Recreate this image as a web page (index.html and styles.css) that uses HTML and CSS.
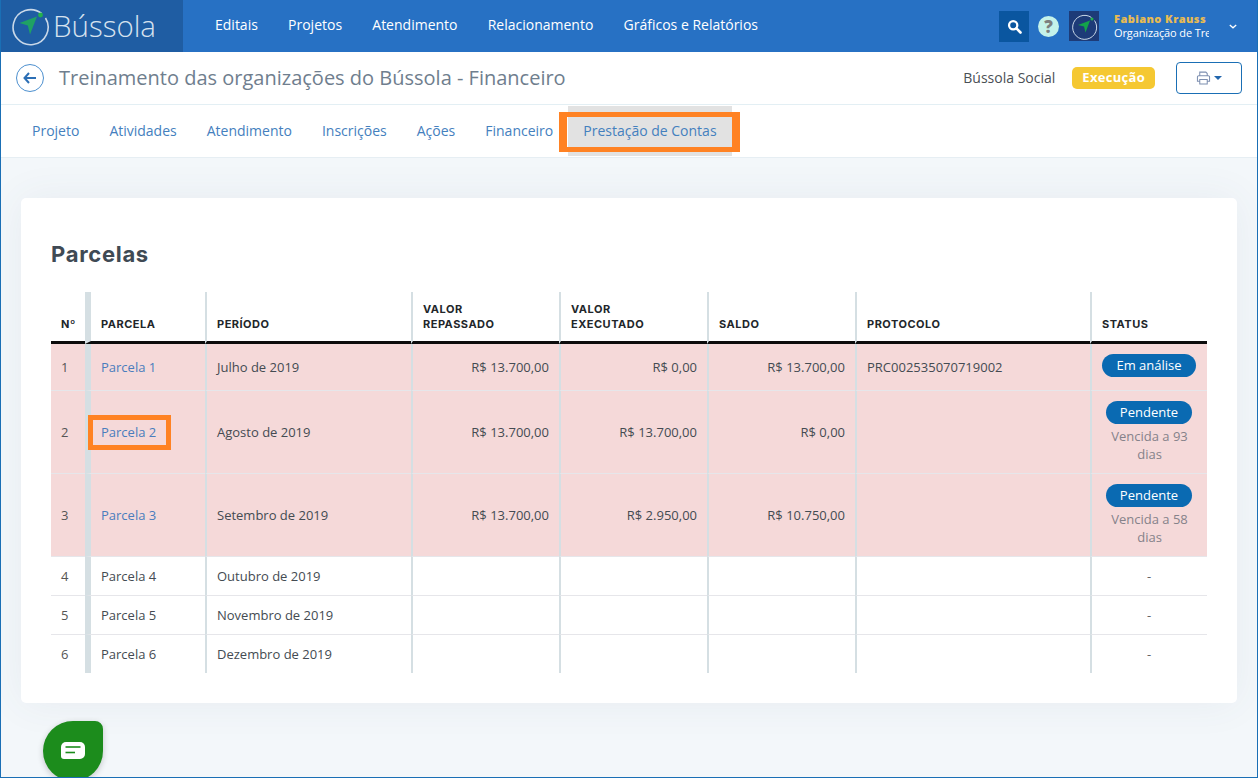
FILE: index.html
```html
<!DOCTYPE html>
<html lang="pt-BR">
<head>
<meta charset="utf-8">
<title>Bússola - Prestação de Contas</title>
<link rel="stylesheet" href="styles.css">
</head>
<body>
<div class="frame">
  <header class="topbar">
    <a class="brand">
      <svg class="brand-mark" viewBox="0 0 40 40" width="40" height="40">
        <path d="M31.5 7.5A17.5 17.5 0 1 0 35.5 12" fill="none" stroke="#c9d8e8" stroke-width="1.6"/>
        <circle cx="30.5" cy="9" r="2.4" fill="#23b14d"/>
        <path d="M9.5 17 L27 10.5 L20 28.5 L17.8 19.6 Z" fill="#1fa164"/>
      </svg>
      <span class="brand-name">Bússola</span>
    </a>
    <nav class="mainnav">
      <a>Editais</a><a>Projetos</a><a>Atendimento</a><a>Relacionamento</a><a>Gráficos e Relatórios</a>
    </nav>
    <div class="userbox">
      <button class="searchbtn" aria-label="Buscar">
        <svg viewBox="0 0 16 16" width="15" height="15"><circle cx="6.6" cy="6.6" r="4.4" fill="none" stroke="#fff" stroke-width="2.4"/><path d="M10 10l4.4 4.4" stroke="#fff" stroke-width="2.8" stroke-linecap="round"/></svg>
      </button>
      <span class="helpicon">?</span>
      <span class="avatar">
        <svg viewBox="0 0 30 30" width="30" height="30">
          <path d="M22.5 6.500A12 12 0 1 0 25.5 9.500" fill="none" stroke="#c9d8e8" stroke-width="1"/>
          <circle cx="23" cy="8" r="1.5" fill="#23b14d"/>
          <path d="M9 14 L21 9.500 L16.500 21.500 L15 15.500 Z" fill="#13a34a"/>
        </svg>
      </span>
      <div class="userinfo">
        <strong class="username">Fabiano Krauss</strong>
        <span class="userorg">Organização de Tre</span>
      </div>
      <svg class="userchev" viewBox="0 0 10 6" width="8" height="5"><path d="M1 1l4 3.600L9 1" fill="none" stroke="#fff" stroke-width="1.600"/></svg>
    </div>
  </header>

  <section class="titlebar">
    <a class="backbtn" aria-label="Voltar">
      <svg viewBox="0 0 14 12" width="14" height="12"><path d="M6 1L1.500 6 6 11M2 6h11" fill="none" stroke="#2c6fb5" stroke-width="2"/></svg>
    </a>
    <h1 class="pagetitle">Treinamento das organizações do Bússola - Financeiro</h1>
    <span class="program">Bússola Social</span>
    <span class="phase">Execução</span>
    <button class="printbtn" aria-label="Imprimir">
      <svg viewBox="0 0 16 15" width="15" height="14"><path d="M4 5V1.200h6.500L12 2.700V5M4 11H1.500V6.400A1.400 1.400 0 0 1 2.900 5h10.200a1.400 1.400 0 0 1 1.400 1.400V11H12M4 9h8v5H4z" fill="none" stroke="#7d8fb0" stroke-width="1.100"/></svg>
      <span class="caret"></span>
    </button>
  </section>

  <nav class="tabs">
    <a class="tab">Projeto</a>
    <a class="tab">Atividades</a>
    <a class="tab">Atendimento</a>
    <a class="tab">Inscrições</a>
    <a class="tab">Ações</a>
    <a class="tab">Financeiro</a>
    <a class="tab tab-active">Prestação de Contas</a>
  </nav>

  <main class="content">
    <section class="card">
      <h2 class="cardtitle">Parcelas</h2>
      <table class="grid">
        <colgroup>
          <col class="c-n"><col class="c-parcela"><col class="c-periodo"><col class="c-val"><col class="c-val"><col class="c-val"><col class="c-prot"><col class="c-status">
        </colgroup>
        <thead>
          <tr>
            <th>Nº</th><th class="thick">PARCELA</th><th>PERÍODO</th><th>VALOR<br>REPASSADO</th><th>VALOR<br>EXECUTADO</th><th>SALDO</th><th>PROTOCOLO</th><th>STATUS</th>
          </tr>
        </thead>
        <tbody>
          <tr class="late r-short">
            <td>1</td><td class="thick"><a class="plink">Parcela 1</a></td><td>Julho de 2019</td>
            <td class="num">R$ 13.700,00</td><td class="num">R$ 0,00</td><td class="num">R$ 13.700,00</td><td>PRC002535070719002</td>
            <td class="st"><span class="pill pill-e">Em análise</span></td>
          </tr>
          <tr class="late r-tall">
            <td>2</td><td class="thick"><a class="plink marked">Parcela 2</a></td><td>Agosto de 2019</td>
            <td class="num">R$ 13.700,00</td><td class="num">R$ 13.700,00</td><td class="num">R$ 0,00</td><td></td>
            <td class="st"><span class="pill">Pendente</span><small class="due">Vencida a 93 dias</small></td>
          </tr>
          <tr class="late r-tall">
            <td>3</td><td class="thick"><a class="plink">Parcela 3</a></td><td>Setembro de 2019</td>
            <td class="num">R$ 13.700,00</td><td class="num">R$ 2.950,00</td><td class="num">R$ 10.750,00</td><td></td>
            <td class="st"><span class="pill">Pendente</span><small class="due">Vencida a 58 dias</small></td>
          </tr>
          <tr class="r-plain">
            <td>4</td><td class="thick">Parcela 4</td><td>Outubro de 2019</td><td></td><td></td><td></td><td></td><td class="st">-</td>
          </tr>
          <tr class="r-plain">
            <td>5</td><td class="thick">Parcela 5</td><td>Novembro de 2019</td><td></td><td></td><td></td><td></td><td class="st">-</td>
          </tr>
          <tr class="r-plain">
            <td>6</td><td class="thick">Parcela 6</td><td>Dezembro de 2019</td><td></td><td></td><td></td><td></td><td class="st">-</td>
          </tr>
        </tbody>
      </table>
    </section>
  </main>

  <button class="chatbtn" aria-label="Chat">
    <svg viewBox="0 0 24 18" width="24" height="18"><path d="M5 0h14a5 5 0 0 1 5 5v7a5 5 0 0 1-5 5H3a3 3 0 0 1-3-3V5a5 5 0 0 1 5-5z" fill="#fff"/><path d="M4.500 5h15" stroke="#1c8c1c" stroke-width="1.600"/><path d="M4.500 10.500h9.500" stroke="#1c8c1c" stroke-width="1.600"/></svg>
  </button>
</div>
</body>
</html>
```

FILE: styles.css
```css
* { box-sizing: border-box; }
html, body { margin: 0; height: 100%; overflow: hidden; }
body { font-family: "Open Sans", "Liberation Sans", sans-serif; font-size: 13px; color: #444b52; background: #fff; }

.frame { position: relative; display: flex; flex-direction: column; height: 778px; overflow: hidden; border: 1px solid #1a6fb5; border-top: 0; }

.topbar { display: flex; align-items: center; height: 52px; margin: 0 -1px; background: #2771c4; flex: none; }
.brand { display: flex; align-items: center; width: 183px; height: 100%; padding-left: 10px; background: #1f5da3; }
.brand-mark { flex: none; }
.brand-name { margin-left: 3px; font-size: 29.5px; font-weight: 300; color: #d6e2ef; line-height: 1; }
.mainnav { display: flex; gap: 30.2px; margin-left: 32px; padding-bottom: 4px; font-size: 14px; color: #fff; }
.userbox { display: flex; align-items: center; margin-left: auto; padding-right: 21px; }
.searchbtn { display: flex; align-items: center; justify-content: center; width: 30px; height: 31px; margin-top: 1px; padding: 0; border: 0; background: #0a56a0; }
.helpicon { display: flex; align-items: center; justify-content: center; width: 21px; height: 21px; margin-left: 9px; border-radius: 50%; background: #c4f2ea; color: #7c7f80; font-weight: 800; font-size: 17px; line-height: 1; }
.avatar { display: block; width: 30px; height: 30px; margin-left: 10px; background: #1d3b78; }
.userinfo { display: flex; flex-direction: column; width: 95px; margin-left: 15px; overflow: hidden; white-space: nowrap; line-height: 14px; }
.username { font-size: 11px; font-weight: 800; color: #e8bb52; letter-spacing: .45px; }
.userorg { font-size: 11px; color: #fff; letter-spacing: -.12px; }
.userchev { margin-left: 20px; }

.titlebar { display: flex; align-items: center; height: 53px; padding: 0 15px; background: #fff; border-bottom: 1px solid #e3eff4; flex: none; }
.backbtn { display: flex; align-items: center; justify-content: center; width: 28px; height: 28px; border: 1px solid #4d90cf; border-radius: 50%; }
.pagetitle { margin: 0 0 2px 15px; font-size: 20px; font-weight: 400; color: #6f7e8e; }
.program { margin: 0 0 2px auto; font-size: 14px; color: #4a4f55; }
.phase { margin-left: 17px; padding: 0 10px; height: 22px; line-height: 21px; border-radius: 5px; background: #f5c832; color: #fff; font-size: 13px; font-weight: 700; letter-spacing: .3px; }
.printbtn { display: flex; align-items: center; justify-content: center; gap: 3px; width: 66px; height: 32px; margin-left: 21px; padding: 0; background: #fff; border: 1px solid #1a6fb5; border-radius: 4px; }
.caret { width: 0; height: 0; border-left: 4px solid transparent; border-right: 4px solid transparent; border-top: 4px solid #2266ad; }

.tabs { display: flex; gap: 30px; height: 53px; padding: 0 0 1px 31px; background: #fff; border-bottom: 1px solid #e6eef3; align-items: center; font-size: 14px; line-height: 19px; color: #4480be; flex: none; }
.tab { position: relative; }
.tab-active { isolation: isolate; }
.tab-active::before { content: ""; position: absolute; z-index: -1; inset: -15px -15px -16px -15px; background: #e2e2e2; }
.tab-active::after { content: ""; position: absolute; inset: -9px -23px -12px -24px; border: solid #ff8223; border-width: 5px 8px; }

.content { flex: 1; padding: 40px 20px 0; background: #f3f7fa; }
.card { height: 505px; padding: 40px 30px 0; background: #fff; border-radius: 5px; box-shadow: 0 0 40px rgba(70, 85, 110, .07); }
.cardtitle { margin: 0 0 22px; font-family: "Inter", "Liberation Sans", sans-serif; font-size: 22px; font-weight: 700; line-height: 32px; color: #3f4a54; letter-spacing: .7px; }

.grid { width: 1156px; table-layout: fixed; border-collapse: separate; border-spacing: 0; }
.c-n { width: 34px; }
.c-parcela { width: 120px; }
.c-periodo { width: 206px; }
.c-val { width: 148px; }
.c-prot { width: 235px; }
.c-status { width: 117px; }

.grid th, .grid td { padding: 0 10px; border-left: 2px solid #d5dfe3; }
.grid th:first-child, .grid td:first-child { border-left: 0; }
.grid .thick { border-left-width: 6px; }
.grid th { height: 52px; padding-bottom: 9px; vertical-align: bottom; text-align: left; font-family: "Inter", "Liberation Sans", sans-serif; font-size: 11px; line-height: 15px; font-weight: 700; color: #22262a; border-bottom: 3px solid #0c0c0c; letter-spacing: .5px; }
.grid td { border-bottom: 1px solid #e6e6ea; }
.grid tr:last-child td { border-bottom: 0; height: 38px; }
.grid td:first-child { color: #555; }

.r-short td { height: 47px; }
.r-tall td { height: 83px; }
.r-plain td { height: 39px; }
.late td { background: #f5d9d9; }

.num { text-align: right; }
.grid .st { text-align: center; padding-left: 8px; padding-right: 9px; color: #666; }
.grid .r-short .st { padding-bottom: 3px; }
.plink { color: #4a7dbd; }
.marked { position: relative; }
.marked::after { content: ""; position: absolute; inset: -8px -15px -9px -13px; border: 5px solid #ff8223; }
.pill { display: inline-block; height: 23px; padding: 0 14px; border-radius: 12px; background: #0a6ab2; color: #fff; line-height: 22px; white-space: nowrap; }
.pill-e { padding: 0 14.5px; }
.due { display: block; margin-top: 3px; padding-left: 1px; font-size: 13px; line-height: 18px; color: #85828a; }

.chatbtn { position: absolute; left: 42px; top: 721px; display: flex; align-items: center; justify-content: center; width: 60px; height: 60px; padding: 0; border: 0; border-radius: 50% 8px 50% 50%; background: #1c8c1c; box-shadow: 0 2px 6px rgba(0, 0, 0, .2); }
```
